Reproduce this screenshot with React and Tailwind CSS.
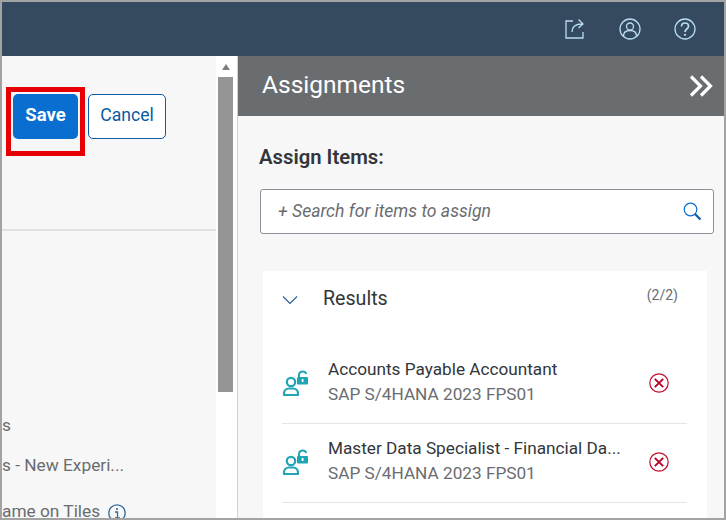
import React from "react";

const font = { fontFamily: 'Roboto, "Noto Sans", Arial, sans-serif' };

function UserLock() {
  return (
    <svg width="28" height="28" viewBox="0 0 28 28" fill="none" className="shrink-0">
      <circle cx="9" cy="12" r="4.200" stroke="#1fa5b5" strokeWidth="2.200" />
      <path d="M2 25v-1.500c0-3 2.500-5 5-5h4c2.500 0 5 2 5 5V25z" stroke="#1fa5b5" strokeWidth="2.200" strokeLinejoin="round" />
      <path d="M17 8V5a3.700 3.700 0 0 1 7.200-1" stroke="#1fa5b5" strokeWidth="2" />
      <rect x="15" y="7" width="11" height="7.500" rx="1" fill="#1fa5b5" />
      <rect x="19.700" y="9" width="1.800" height="3" fill="#fff" />
    </svg>
  );
}

function Remove() {
  return (
    <svg width="20" height="20" viewBox="0 0 20 20" fill="none">
      <circle cx="10" cy="10" r="9.200" stroke="#c0102a" strokeWidth="1.200" />
      <path d="M5.800 5.800l8.400 8.400M14.200 5.800l-8.400 8.400" stroke="#b8002a" strokeWidth="1.900" />
    </svg>
  );
}

function Row({ title, sub }) {
  return (
    <div className="flex items-center h-[79px] border-b border-[#e5e5e5]">
      <UserLock />
      <div className="ml-[18px] w-[300px] min-w-0 pb-[5px]">
        <div className="text-[17.2px] leading-[25px] text-[#32363a] truncate">{title}</div>
        <div className="text-[17.2px] leading-[25px] text-[#6a6d70] truncate">{sub}</div>
      </div>
      <div className="ml-[21px] -mt-[2px]"><Remove /></div>
    </div>
  );
}

export default function App() {
  return (
    <div style={font} className="w-[726px] h-[520px] border-2 border-[#a3a3a3] flex flex-col overflow-hidden bg-white">
      <header className="h-[54px] shrink-0 bg-[#354a5f] flex items-center justify-end pr-[28px] gap-[33px] text-[#b8dcf5]">
        <svg width="22" height="22" viewBox="0 0 22 22" fill="none" stroke="currentColor" strokeWidth="1.300">
          <path d="M9 3H2v17h17v-6" />
          <path d="M8 14c0-5 3-8 10-8M14.500 1.500L19 6l-4.500 4" />
        </svg>
        <svg width="22" height="22" viewBox="0 0 22 22" fill="none" stroke="currentColor" strokeWidth="1.300">
          <circle cx="11" cy="11" r="10" />
          <circle cx="11" cy="8.500" r="3.500" />
          <path d="M4.500 18c0-4 2.500-5.500 6.500-5.500s6.500 1.500 6.500 5.500" />
        </svg>
        <svg width="22" height="22" viewBox="0 0 22 22" fill="none" stroke="currentColor" strokeWidth="1.300">
          <circle cx="11" cy="11" r="10" />
          <path d="M7.500 8.500c0-2.200 1.500-3.500 3.500-3.500s3.500 1.300 3.500 3.200c0 2.800-3.500 2.800-3.500 5.800" strokeWidth="1.700" />
          <circle cx="11" cy="16.800" r="1.100" fill="currentColor" stroke="none" />
        </svg>
      </header>

      <div className="flex-1 min-h-0 flex">
        <aside className="w-[214px] shrink-0 bg-[#f7f7f7] flex flex-col overflow-hidden">
          <div className="h-[175px] shrink-0 border-b-2 border-[#e2e2e2] pt-[31px] flex items-start pl-[4px]">
            <div className="w-[79px] h-[69px] border-[5px] border-[#e60005] pt-[2px] pl-[2px] shrink-0">
              <button className="w-[65px] h-[45px] rounded-[5px] bg-[#0a6ed1] text-white font-bold text-[18.5px] pb-[1px]">Save</button>
            </div>
            <button className="ml-[3px] mt-[7px] w-[78px] h-[45px] rounded-[5px] border border-[#0a5aa5] bg-white text-[#0a5aa5] text-[17.6px] pb-[2px] shrink-0">Cancel</button>
          </div>
          <div className="flex-1 text-[#6a6d70] text-[17.3px] whitespace-nowrap overflow-hidden">
            <div className="mt-[182px] h-[24px] leading-[24px]">s</div>
            <div className="mt-[16px] h-[24px] leading-[24px]">s - New Experi...</div>
            <div className="mt-[22px] h-[24px] leading-[24px] flex items-center">
              ame on Tiles
              <svg width="18" height="18" viewBox="0 0 18 18" fill="none" className="ml-[8px] mt-[3px]" stroke="#2f6a9e" strokeWidth="1.300">
                <circle cx="9" cy="9" r="8.200" />
                <path d="M7 8h2.500v6M7 14h5" />
                <circle cx="9" cy="5" r="1" fill="#2f6a9e" stroke="none" />
              </svg>
            </div>
          </div>
        </aside>

        <div className="w-[21px] shrink-0 bg-white pl-[2px] pr-[4px]">
          <div className="h-[21px] flex items-center justify-center">
            <div className="w-0 h-0 border-x-[4px] border-x-transparent border-b-[6px] border-b-[#7d7d7d]" />
          </div>
          <div className="h-[315px] bg-[#959595]" />
        </div>

        <main className="flex-1 min-w-0 bg-[#f7f7f7] border-l border-[#d0d0d0] flex flex-col">
          <div className="h-[60px] shrink-0 bg-[#6a6d70] flex items-center justify-between pl-[24px] pr-[11px] text-white">
            <span className="text-[24.500px] pb-[2px]">Assignments</span>
            <svg width="24" height="22" viewBox="0 0 24 22" fill="none" stroke="#fff" strokeWidth="3.200">
              <path d="M2 1.500l9.500 9.500L2 20.500M12 1.500l9.500 9.500L12 20.500" />
            </svg>
          </div>
          <div className="pl-[22px] pr-[10px]">
            <h2 className="mt-[28px] -ml-[1px] text-[20.3px] leading-[26px] font-semibold text-[#32363a]">Assign Items:</h2>
            <div className="mt-[19px] h-[45px] rounded-[3px] border border-[#89919a] bg-white flex items-center justify-between pl-[17px] pr-[11px]">
              <span className="text-[17.6px] italic text-[#6a6d70]">+ Search for items to assign</span>
              <svg width="19" height="19" viewBox="0 0 19 19" fill="none">
                <circle cx="7.500" cy="7.500" r="6.300" stroke="#0a6ed1" strokeWidth="1.200" />
                <path d="M12 12l5.500 5.500" stroke="#0a5aa5" strokeWidth="2.200" />
              </svg>
            </div>
          </div>
          <section className="ml-[25px] mr-[17px] mt-[37px] flex-1 bg-white pl-[19px] pr-[20px] overflow-hidden">
            <div className="h-[54px] flex items-center">
              <svg width="16" height="10" viewBox="0 0 16 10" fill="none" stroke="#2f5f8f" strokeWidth="1.200" className="mt-[4px]">
                <path d="M1 1.500l7 7 7-7" />
              </svg>
              <span className="ml-[25px] text-[19.6px] pt-[2px] text-[#32363a]">Results</span>
              <span className="ml-auto mr-[9px] -mt-[5px] text-[14px] text-[#6a6d70]">(2/2)</span>
            </div>
            <div className="mt-[20px]">
              <Row title="Accounts Payable Accountant" sub="SAP S/4HANA 2023 FPS01" />
              <Row title="Master Data Specialist - Financial Da..." sub="SAP S/4HANA 2023 FPS01" />
            </div>
          </section>
        </main>
      </div>
    </div>
  );
}
